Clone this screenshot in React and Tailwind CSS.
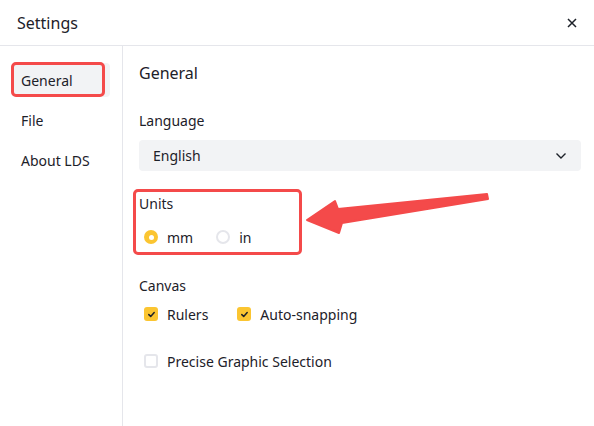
import React from 'react';

const font = { fontFamily: '"Noto Sans", "Noto Sans CJK SC", sans-serif' };

const Radio = ({ checked, label }) => (
  <label className="flex items-center gap-[9px]">
    {checked ? (
      <span className="w-[14px] h-[14px] rounded-full bg-[#fbc531] flex items-center justify-center">
        <span className="w-[5px] h-[5px] rounded-full bg-white" />
      </span>
    ) : (
      <span className="w-[14px] h-[14px] rounded-full border-2 border-[#e5e6eb] bg-white" />
    )}
    <span className="text-[14px] text-[#1d2129]">{label}</span>
  </label>
);

const Check = ({ checked, label }) => (
  <label className="flex items-center gap-[9px]">
    {checked ? (
      <span className="w-[14px] h-[14px] rounded-[3px] bg-[#fbc531] flex items-center justify-center">
        <svg width="9" height="9" viewBox="0 0 9 9">
          <path d="M1.8 4.6 L3.7 6.4 L7.2 2.6" fill="none" stroke="#1d2129" strokeWidth="1.5" strokeLinecap="round" strokeLinejoin="round" />
        </svg>
      </span>
    ) : (
      <span className="w-[14px] h-[14px] rounded-[3px] border-2 border-[#e5e6eb] bg-white" />
    )}
    <span className="text-[14px] text-[#1d2129]">{label}</span>
  </label>
);

export default function App() {
  return (
    <div className="relative w-[594px] h-[426px] bg-white flex flex-col overflow-hidden text-[#1d2129]" style={font}>
      {/* header */}
      <div className="h-[46px] shrink-0 border-b border-[#e5e6eb] flex items-center justify-between pl-[17px] pr-[17px]">
        <span className="text-[16px]">Settings</span>
        <svg width="10" height="10" viewBox="0 0 10 10">
          <path d="M1 1 L9 9 M9 1 L1 9" stroke="#1d2129" strokeWidth="1.5" />
        </svg>
      </div>

      <div className="flex flex-1">
        {/* sidebar */}
        <div className="w-[123px] shrink-0 border-r border-[#e5e6eb] pt-[17px] px-[12px] flex flex-col gap-[6px]">
          <div className="h-[34px] rounded-[4px] bg-[#f2f3f5] flex items-center pl-[9px] text-[14px]">General</div>
          <div className="h-[34px] flex items-center pl-[9px] text-[14px]">File</div>
          <div className="h-[34px] flex items-center pl-[9px] text-[14px]">About LDS</div>
        </div>

        {/* content */}
        <div className="flex-1 pl-[16px] pr-[13px] pt-[16px] flex flex-col">
          <div className="h-[22px] flex items-center text-[16px]">General</div>
          <div className="h-[20px] mt-[26px] flex items-center text-[14px]">Language</div>
          <div className="h-[31px] mt-[10px] rounded-[4px] bg-[#f2f3f5] flex items-center justify-between pl-[14px] pr-[14px] text-[14px]">
            <span>English</span>
            <svg width="12" height="8" viewBox="0 0 12 8">
              <path d="M1.5 1.5 L6 6 L10.5 1.5" fill="none" stroke="#1d2129" strokeWidth="1.4" />
            </svg>
          </div>
          <div className="h-[20px] mt-[22px] flex items-center text-[14px]">Units</div>
          <div className="h-[20px] mt-[14px] flex items-center gap-[23px] pl-[5px]">
            <Radio checked label="mm" />
            <Radio label="in" />
          </div>
          <div className="h-[20px] mt-[28px] flex items-center text-[14px]">Canvas</div>
          <div className="h-[20px] mt-[9px] flex items-center gap-[29px] pl-[5px]">
            <Check checked label="Rulers" />
            <Check checked label="Auto-snapping" />
          </div>
          <div className="h-[20px] mt-[27px] flex items-center pl-[5px]">
            <Check label="Precise Graphic Selection" />
          </div>
        </div>
      </div>

      {/* annotations */}
      <div className="absolute left-[11px] top-[62px] w-[94px] h-[35px] rounded-[5px] border-[3px] border-[#f44a4a]" />
      <div className="absolute left-[133px] top-[189px] w-[169px] h-[66px] rounded-[5px] border-[3px] border-[#f44a4a]" />
      <svg className="absolute left-0 top-0" width="594" height="426" viewBox="0 0 594 426">
        <polygon
          points="307,220 335,201 338,209 487,194 488,199 342,223 339,233"
          fill="#f44a4a"
          stroke="#f44a4a"
          strokeWidth="2"
          strokeLinejoin="round"
        />
      </svg>
    </div>
  );
}
